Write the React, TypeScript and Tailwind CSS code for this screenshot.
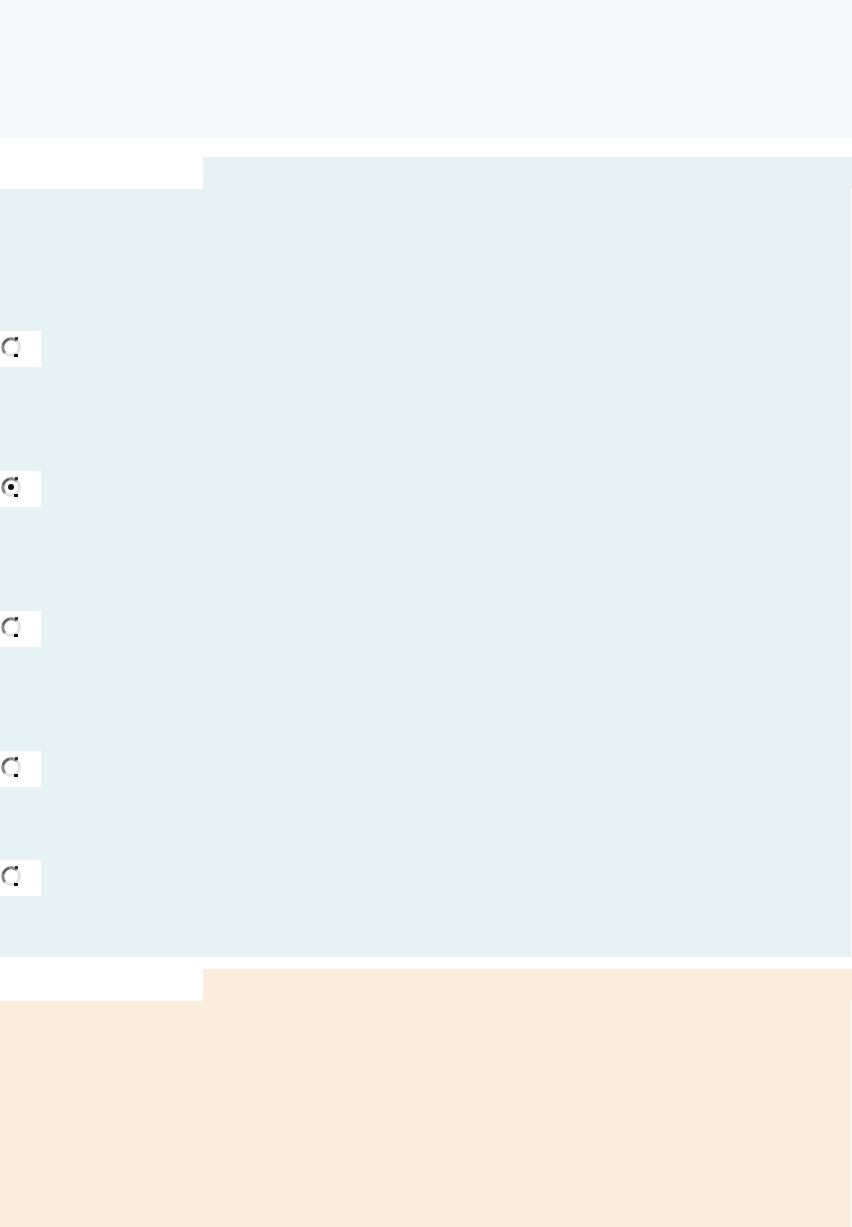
import React from 'react';

const Radio = ({ checked }: { checked?: boolean }) => (
  <div className="w-[41px] h-[36px] bg-white">
    <svg width="24" height="36" viewBox="0 0 24 36">
      <circle cx="11" cy="16" r="8.5" fill="none" stroke="#e2e2e2" strokeWidth="3" />
      <path d="M17 10 A8.5 8.5 0 0 0 5 22" fill="none" stroke="#8a8a8a" strokeWidth="3" />
      <path d="M9 8 A8.5 8.5 0 0 0 3 14" fill="none" stroke="#606060" strokeWidth="2" />
      <rect x="15" y="6" width="3" height="3" fill="#333" />
      <rect x="14" y="23" width="4" height="3" fill="#111" />
      {checked && <circle cx="11" cy="16" r="3" fill="#111" />}
    </svg>
  </div>
);

export default function App() {
  const radios = [
    { id: 1, checked: false, gap: '' },
    { id: 2, checked: true, gap: 'mt-[104px]' },
    { id: 3, checked: false, gap: 'mt-[104px]' },
    { id: 4, checked: false, gap: 'mt-[104px]' },
    { id: 5, checked: false, gap: 'mt-[73px]' },
  ];

  return (
    <div className="min-h-screen w-[852px] bg-white font-['Liberation_Sans',sans-serif]">
      {/* Top bar */}
      <div className="h-[137px] bg-[#f6f8fa]" />

      {/* Blue section */}
      <div className="pt-[20px]">
        <div className="flex h-[32px]">
          <div className="w-[203px] bg-white" />
          <div className="flex-1 bg-[#e6f2f4]" />
        </div>
        <div className="w-[851px] bg-[#e6f2f4] pt-[142px] pb-[61px]">
          {radios.map((r) => (
            <div key={r.id} className={r.gap}>
              <Radio checked={r.checked} />
            </div>
          ))}
        </div>
      </div>

      {/* Peach section */}
      <div className="pt-[12px]">
        <div className="flex h-[32px]">
          <div className="w-[203px] bg-white" />
          <div className="flex-1 bg-[#fbeddc]" />
        </div>
        <div className="w-[851px] h-[226px] bg-[#fbeddc]" />
      </div>
    </div>
  );
}
